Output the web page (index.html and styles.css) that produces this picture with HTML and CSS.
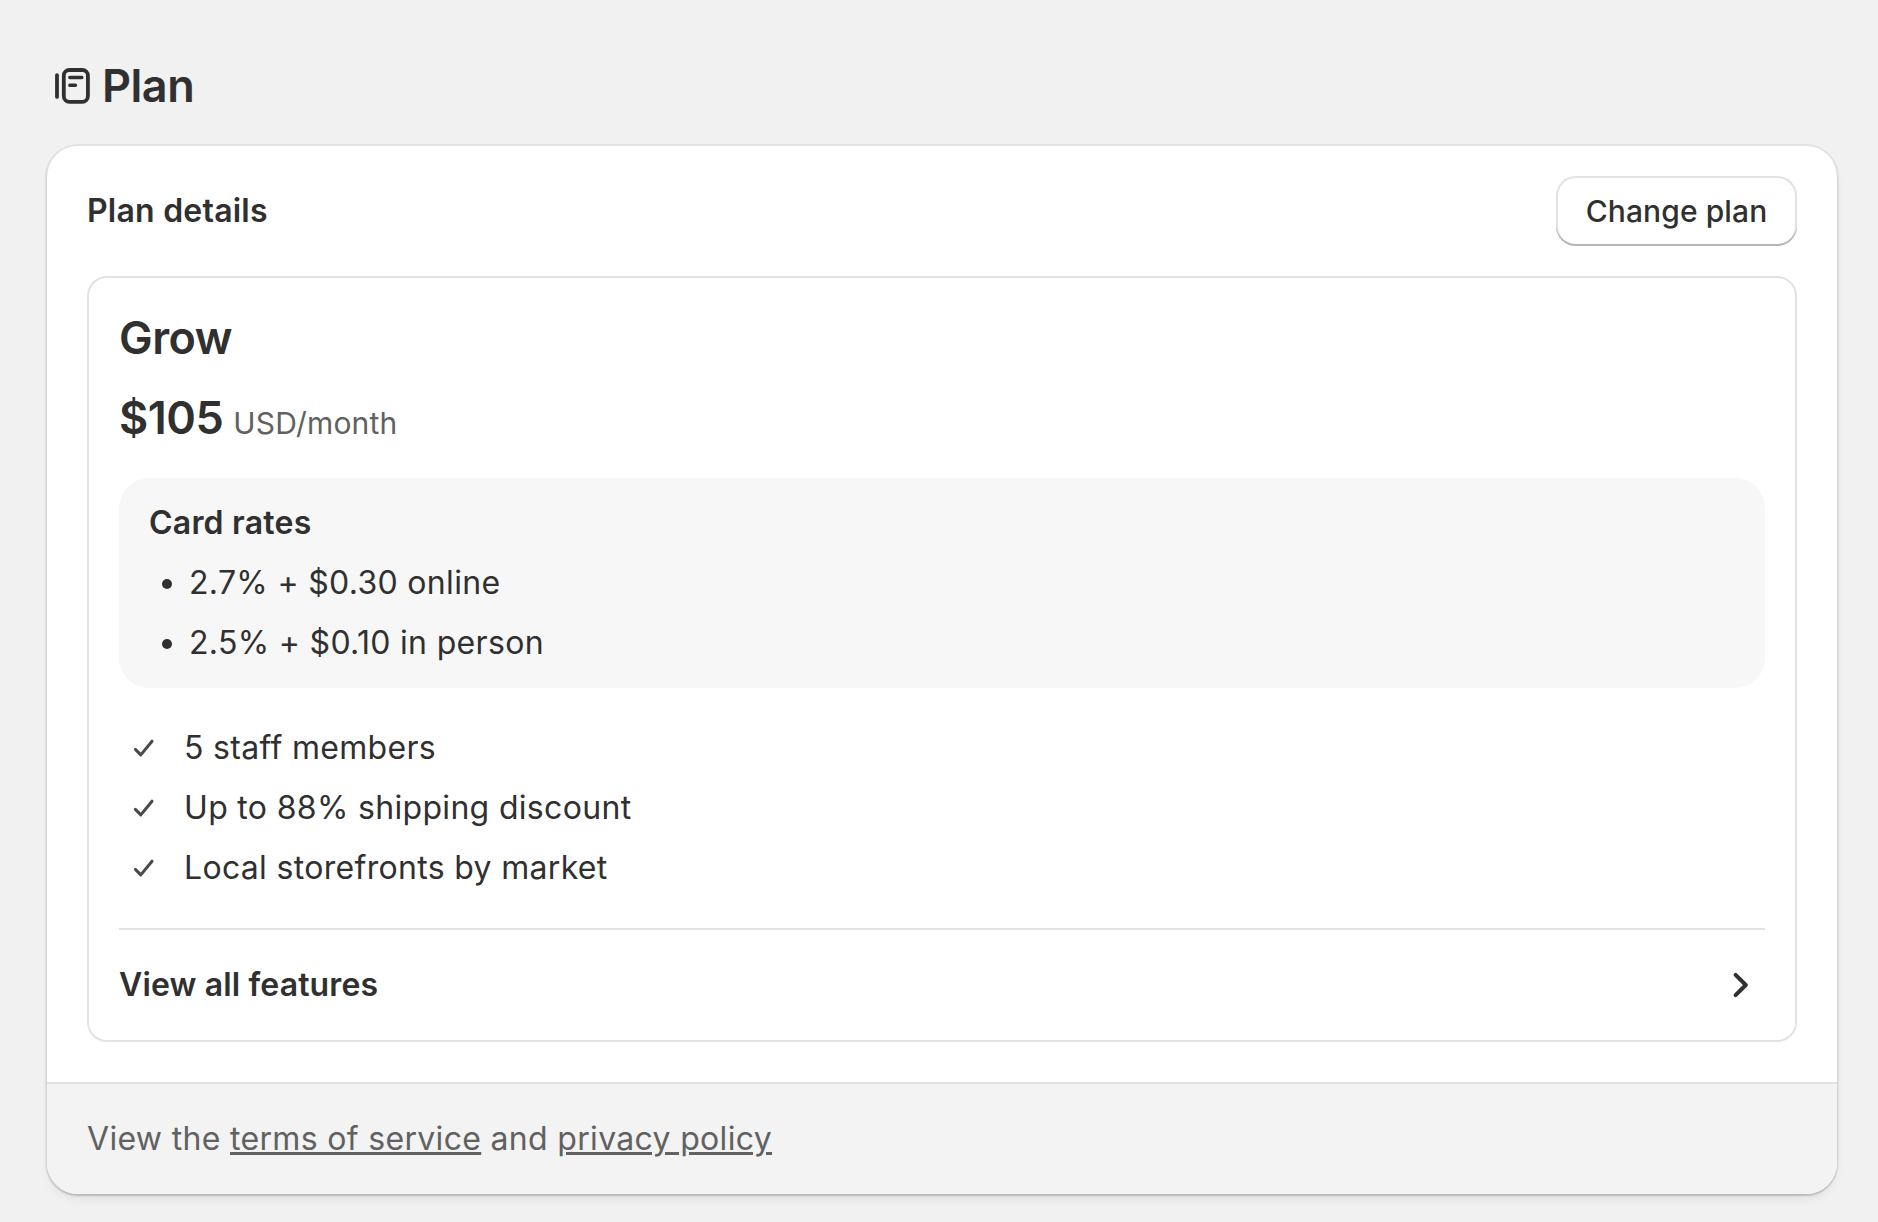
FILE: index.html
```html
<!DOCTYPE html>
<html lang="en">
  <head>
    <meta charset="UTF-8" />
    <meta name="viewport" content="width=device-width, initial-scale=1.0" />
    <title>Plan</title>
    <link rel="stylesheet" href="styles.css">
  </head>
  <body>
    <main class="page">
      <header class="page-header">
        <svg class="plan-icon" viewBox="0 0 36 36" fill="none" stroke="currentColor" stroke-linecap="round">
          <path d="M2 7.1V28.9" stroke-width="3.8" />
          <rect x="8.8" y="2" width="24.1" height="31.9" rx="5.6" stroke-width="3.8" />
          <path d="M14.9 9.5H26.8M14.9 17.3H20.4" stroke-width="3.6" />
        </svg>
        <h1 class="page-title">Plan</h1>
      </header>

      <section class="card">
        <div class="card-body">
          <div class="card-header">
            <h2 class="card-title">Plan details</h2>
            <button class="button" type="button">Change plan</button>
          </div>

          <div class="plan">
            <h3 class="plan-name">Grow</h3>
            <p class="plan-price"><span class="price">$105</span><span class="period">USD/month</span></p>

            <div class="rates">
              <h4 class="rates-title">Card rates</h4>
              <ul class="rates-list">
                <li>2.7% + $0.30 online</li>
                <li>2.5% + $0.10 in person</li>
              </ul>
            </div>

            <ul class="features">
              <li>
                <svg class="check" viewBox="0 0 20 18"><path d="M1.4 10.4L6.8 15.9L18 2.2" /></svg>
                5 staff members
              </li>
              <li>
                <svg class="check" viewBox="0 0 20 18"><path d="M1.4 10.4L6.8 15.9L18 2.2" /></svg>
                Up to 88% shipping discount
              </li>
              <li>
                <svg class="check" viewBox="0 0 20 18"><path d="M1.4 10.4L6.8 15.9L18 2.2" /></svg>
                Local storefronts by market
              </li>
            </ul>

            <div class="all-features">
              <span>View all features</span>
              <svg class="chevron" viewBox="0 0 16 26"><path d="M2.6 2.8L12.8 13L2.6 23.2" /></svg>
            </div>
          </div>
        </div>

        <footer class="card-footer">
          View the <a href="#">terms of service</a> and <a href="#">privacy policy</a>
        </footer>
      </section>
    </main>
  </body>
</html>
```
FILE: styles.css
```css
:root {
  --text: #303030;
  --text-subdued: #616161;
  --border: #e3e3e3;
}

* {
  box-sizing: border-box;
}

body {
  margin: 0;
  background-color: #f1f1f1;
  color: var(--text);
  font-family: Inter, sans-serif;
  font-size: 32px;
  line-height: 60px;
  letter-spacing: 0.32px;
}

h1,
h2,
h3,
h4,
p,
ul {
  margin: 0;
  padding: 0;
}

.page {
  padding: 58px 41px 28px 47px;
}

.page-header {
  display: flex;
  align-items: center;
  gap: 11px;
  height: 56px;
  margin-bottom: 32px;
  padding-left: 8px;
}

.plan-icon {
  width: 36px;
  height: 36px;
  overflow: visible;
}

.page-title,
.plan-name,
.price {
  font-size: 45px;
  font-weight: 600;
  line-height: 58px;
  letter-spacing: -0.5px;
}

.card {
  overflow: hidden;
  border-radius: 31px;
  background-color: #fff;
  box-shadow:
    0 0 0 2px rgba(0, 0, 0, 0.06),
    0 2px 2px rgba(0, 0, 0, 0.13),
    0 7px 12px -3px rgba(0, 0, 0, 0.08);
}

.card-body {
  padding: 30px 40px 40px;
}

.card-header {
  display: flex;
  align-items: center;
  justify-content: space-between;
  height: 70px;
  margin-bottom: 30px;
}

.card-title,
.rates-title {
  font-size: 32px;
  font-weight: 600;
  letter-spacing: 0.22px;
}

.button {
  width: 241px;
  height: 70px;
  padding: 0;
  border: none;
  border-radius: 20px;
  background-color: #fff;
  box-shadow:
    inset 0 -2px 0 #b5b5b5,
    inset 0 0 0 2px var(--border);
  color: var(--text);
  font: 500 30px/70px Inter, sans-serif;
  letter-spacing: 0.1px;
}

.plan {
  padding: 31px 30px 0;
  border: 2px solid var(--border);
  border-radius: 20px;
}

.plan-price {
  display: flex;
  align-items: baseline;
  gap: 10px;
  height: 58px;
  margin: 22px 0 31px;
  line-height: 58px;
}

.period {
  color: var(--text-subdued);
  font-size: 30px;
  letter-spacing: 0.2px;
}

.rates {
  padding: 15px 30px;
  border-radius: 30px;
  background-color: #f7f7f7;
}

.rates-list,
.features {
  list-style: none;
}

.rates-list li {
  display: flex;
  align-items: center;
  gap: 17px;
  padding-left: 13px;
}

.rates-list li::before {
  content: "";
  width: 10px;
  height: 10px;
  margin-top: 2px;
  border-radius: 50%;
  background-color: var(--text);
}

.features {
  margin: 30px 0;
}

.features li {
  display: flex;
  align-items: center;
  gap: 30px;
  padding-left: 15px;
}

.check,
.chevron {
  overflow: visible;
  fill: none;
  stroke-linecap: round;
  stroke-linejoin: round;
}

.check {
  width: 20px;
  height: 18px;
  stroke: #4a4a4a;
  stroke-width: 3;
}

.all-features {
  display: flex;
  align-items: center;
  justify-content: space-between;
  padding: 25px 16px 25px 0;
  border-top: 2px solid var(--border);
  font-weight: 600;
  letter-spacing: 0.14px;
}

.chevron {
  width: 16px;
  height: 26px;
  stroke: var(--text);
  stroke-width: 4;
}

.card-footer {
  padding: 25px 40px;
  border-top: 2px solid var(--border);
  background-color: #f3f3f3;
  color: var(--text-subdued);
}

.card-footer a {
  color: inherit;
}
```
